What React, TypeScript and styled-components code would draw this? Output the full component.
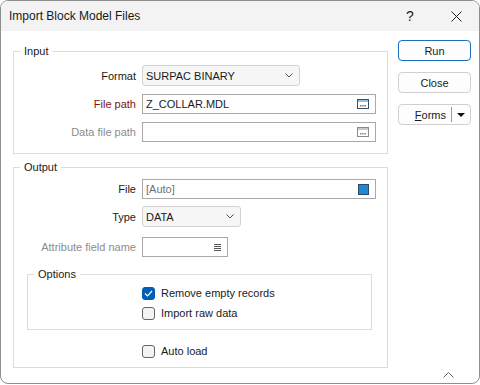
import styled, { createGlobalStyle } from "styled-components"

const GlobalStyle = createGlobalStyle`
    html, body {
        margin: 0;
        padding: 0;
        background: #ffffff;
    }
    body {
        font-family: "Liberation Sans", Arial, sans-serif;
        font-size: 11px;
        color: #1a1a1a;
    }
    * { box-sizing: border-box; }
`

const Window = styled.div`
    position: relative;
    width: 480px;
    height: 384px;
    border: 1px solid #8e8e8e;
    border-radius: 8px;
    overflow: hidden;
    display: flex;
    flex-direction: column;
    background: #ffffff;
`

const TitleBar = styled.div`
    height: 30px;
    flex: none;
    display: flex;
    align-items: center;
    padding-left: 8px;
    background: #f3f3f3;
    font-size: 12px;
    color: #1a1a1a;
`

const TitleText = styled.div`
    flex: 1;
`

const CaptionButton = styled.div`
    width: 46px;
    height: 30px;
    display: flex;
    align-items: center;
    justify-content: center;
    font-size: 14px;
    color: #222;
`

const Body = styled.div`
    flex: 1;
    display: flex;
    padding: 9px 0 0 12px;
`

const Main = styled.div`
    width: 375px;
    margin-top: 3px;
`

const Side = styled.div`
    width: 73px;
    margin-left: 10px;
    display: flex;
    flex-direction: column;
    gap: 11px;
`

const Group = styled.fieldset<{ $mt?: number; $ml?: number; $w?: number; $pb: number }>`
    margin: ${p => p.$mt || 0}px 0 0 ${p => p.$ml || 0}px;
    width: ${p => (p.$w ? p.$w + "px" : "auto")};
    padding: 0 0 ${p => p.$pb}px 0;
    border: 1px solid #dcdcdc;
    min-width: 0;
`

const Legend = styled.legend`
    margin-left: 6px;
    padding: 0 4px;
    line-height: 16px;
    font-size: 11px;
    color: #1a1a1a;
`

const Row = styled.div<{ $mt: number; $pl?: number }>`
    display: flex;
    align-items: center;
    margin-top: ${p => p.$mt}px;
    padding-left: ${p => p.$pl || 0}px;
`

const Label = styled.div<{ $color?: string }>`
    width: 128px;
    padding-right: 6px;
    text-align: right;
    color: ${p => p.$color || "#1a1a1a"};
`

const TextBox = styled.div<{ $w: number }>`
    width: ${p => p.$w}px;
    height: 20px;
    border: 1px solid #a9a9a9;
    background: #ffffff;
    display: flex;
    align-items: center;
    padding: 0 6px 0 3px;
`

const BoxText = styled.span<{ $muted?: boolean }>`
    flex: 1;
    color: ${p => (p.$muted ? "#6f6f6f" : "#1a1a1a")};
`

const Combo = styled.div<{ $w: number }>`
    width: ${p => p.$w}px;
    height: 21px;
    border: 1px solid #d3d3d3;
    border-radius: 3px;
    background: #f6f6f6;
    display: flex;
    align-items: center;
    padding: 0 6px 0 3px;
`

const Button = styled.div<{ $focused?: boolean }>`
    height: 21px;
    border: 1px solid ${p => (p.$focused ? "#1a6fc0" : "#d0d0d0")};
    border-radius: 4px;
    background: #fdfdfd;
    display: flex;
    align-items: center;
    justify-content: center;
    color: #1a1a1a;
`

const SplitMain = styled.div`
    flex: 1;
    text-align: right;
    padding-right: 5px;
    u { text-decoration: underline; }
`

const SplitDivider = styled.div`
    width: 1px;
    height: 15px;
    background: #9a9a9a;
`

const SplitArrow = styled.div`
    width: 18px;
    display: flex;
    justify-content: center;
`

const CheckRow = styled.label`
    display: flex;
    align-items: center;
    gap: 6px;
    line-height: 16px;
`

const CheckBox = styled.div<{ $checked?: boolean }>`
    width: 13px;
    height: 13px;
    border-radius: 3px;
    border: 1px solid ${p => (p.$checked ? "#005fb8" : "#646464")};
    background: ${p => (p.$checked ? "#005fb8" : "#f4f4f4")};
    display: flex;
    align-items: center;
    justify-content: center;
`

const Grip = styled.div`
    position: absolute;
    right: 25px;
    bottom: 5px;
    display: flex;
`

const Chevron = () => (
    <svg width="8" height="5" viewBox="0 0 8 5">
        <path d="M0.5 0.5 L4 4 L7.5 0.5" fill="none" stroke="#555" strokeWidth="1" />
    </svg>
)

const BrowseIcon = ({ muted }: { muted?: boolean }) => (
    <svg width="12" height="10" viewBox="0 0 12 10">
        <rect x="0.5" y="0.5" width="11" height="9" fill="#fff" stroke={muted ? "#8a8a8a" : "#35506e"} />
        <rect x="1" y="1" width="10" height="2" fill={muted ? "#c8c8c8" : "#8fc0e6"} />
        <rect x="3" y="6" width="1.5" height="1.5" fill={muted ? "#8a8a8a" : "#b06e1e"} />
        <rect x="5.25" y="6" width="1.5" height="1.5" fill={muted ? "#8a8a8a" : "#b06e1e"} />
        <rect x="7.5" y="6" width="1.5" height="1.5" fill={muted ? "#8a8a8a" : "#b06e1e"} />
    </svg>
)

const ColourIcon = () => (
    <svg width="11" height="11" viewBox="0 0 11 11">
        <rect x="0.5" y="0.5" width="10" height="10" fill="#2088cf" stroke="#2e4a68" />
    </svg>
)

const ListIcon = () => (
    <svg width="7" height="7" viewBox="0 0 7 7">
        <path d="M0 0.5H7M0 2.5H7M0 4.5H7M0 6.5H7" stroke="#555" strokeWidth="1" />
    </svg>
)

const Tick = () => (
    <svg width="9" height="7" viewBox="0 0 9 7">
        <path d="M1 3.5 L3.5 6 L8 1" fill="none" stroke="#fff" strokeWidth="1.2" />
    </svg>
)

export default function App() {
    return (
        <>
            <GlobalStyle />
            <Window>
                <TitleBar>
                    <TitleText>Import Block Model Files</TitleText>
                    <CaptionButton>?</CaptionButton>
                    <CaptionButton>
                        <svg width="11" height="11" viewBox="0 0 11 11">
                            <path d="M0.5 0.5 L10.5 10.5 M10.5 0.5 L0.5 10.5" stroke="#222" strokeWidth="1" />
                        </svg>
                    </CaptionButton>
                </TitleBar>
                <Body>
                    <Main>
                        <Group $pb={11}>
                            <Legend>Input</Legend>
                            <Row $mt={6}>
                                <Label>Format</Label>
                                <Combo $w={158}>
                                    <BoxText>SURPAC BINARY</BoxText>
                                    <Chevron />
                                </Combo>
                            </Row>
                            <Row $mt={8}>
                                <Label $color="#7d1414">File path</Label>
                                <TextBox $w={234}>
                                    <BoxText>Z_COLLAR.MDL</BoxText>
                                    <BrowseIcon />
                                </TextBox>
                            </Row>
                            <Row $mt={8}>
                                <Label $color="#8c8c8c">Data file path</Label>
                                <TextBox $w={234}>
                                    <BoxText />
                                    <BrowseIcon muted />
                                </TextBox>
                            </Row>
                        </Group>

                        <Group $mt={5} $pb={8}>
                            <Legend>Output</Legend>
                            <Row $mt={4}>
                                <Label>File</Label>
                                <TextBox $w={234}>
                                    <BoxText $muted>[Auto]</BoxText>
                                    <ColourIcon />
                                </TextBox>
                            </Row>
                            <Row $mt={7}>
                                <Label>Type</Label>
                                <Combo $w={99}>
                                    <BoxText>DATA</BoxText>
                                    <Chevron />
                                </Combo>
                            </Row>
                            <Row $mt={10}>
                                <Label $color="#8c8c8c">Attribute field name</Label>
                                <TextBox $w={86}>
                                    <BoxText />
                                    <ListIcon />
                                </TextBox>
                            </Row>

                            <Group $mt={9} $ml={13} $w={345} $pb={8}>
                                <Legend>Options</Legend>
                                <Row $mt={3} $pl={114}>
                                    <CheckRow>
                                        <CheckBox $checked>
                                            <Tick />
                                        </CheckBox>
                                        Remove empty records
                                    </CheckRow>
                                </Row>
                                <Row $mt={4} $pl={114}>
                                    <CheckRow>
                                        <CheckBox />
                                        Import raw data
                                    </CheckRow>
                                </Row>
                            </Group>

                            <Row $mt={13} $pl={128}>
                                <CheckRow>
                                    <CheckBox />
                                    Auto load
                                </CheckRow>
                            </Row>
                        </Group>
                    </Main>

                    <Side>
                        <Button $focused>Run</Button>
                        <Button>Close</Button>
                        <Button>
                            <SplitMain>
                                <u>F</u>orms
                            </SplitMain>
                            <SplitDivider />
                            <SplitArrow>
                                <svg width="8" height="4" viewBox="0 0 8 4">
                                    <path d="M0 0 H8 L4 4 Z" fill="#111" />
                                </svg>
                            </SplitArrow>
                        </Button>
                    </Side>
                </Body>
                <Grip>
                    <svg width="11" height="6" viewBox="0 0 11 6">
                        <path d="M0.5 5.5 L5.5 0.5 L10.5 5.5" fill="none" stroke="#666" strokeWidth="1" />
                    </svg>
                </Grip>
            </Window>
        </>
    )
}
